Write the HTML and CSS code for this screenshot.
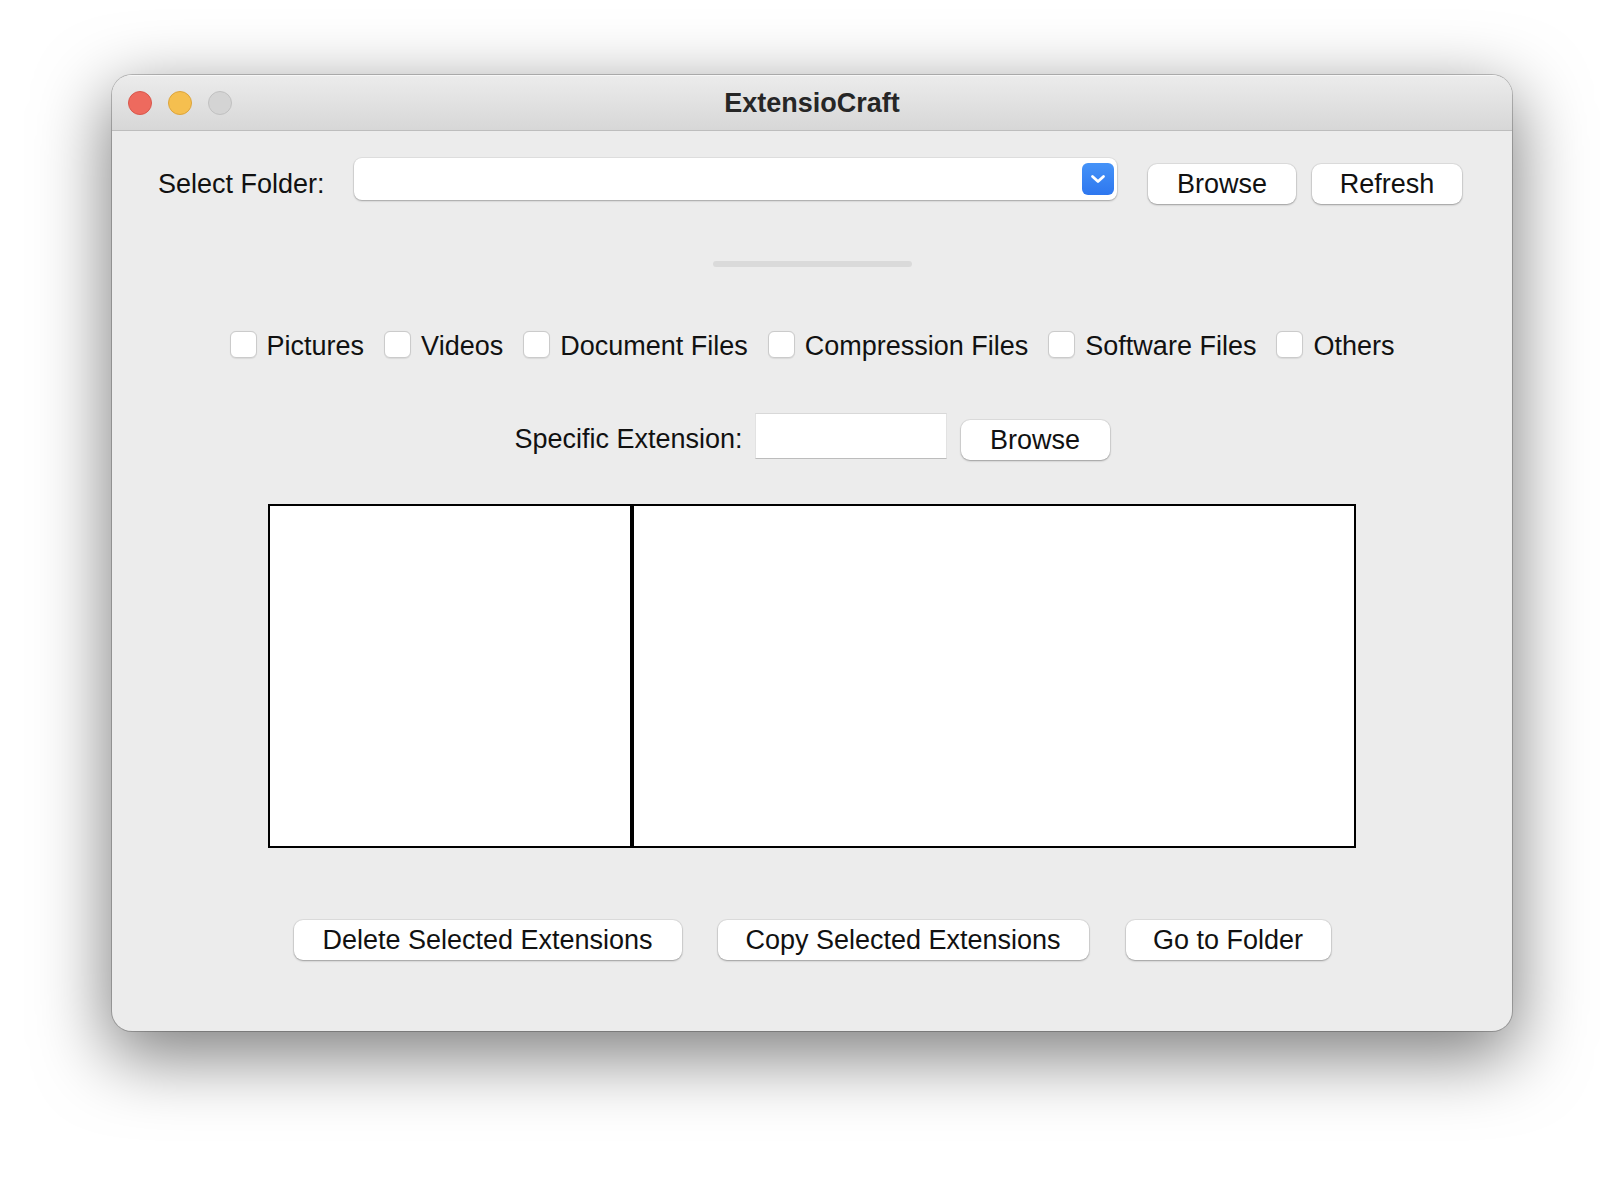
FILE: index.html
```html
<!DOCTYPE html>
<html lang="en">
<head>
<meta charset="utf-8">
<title>ExtensioCraft</title>
<link rel="stylesheet" href="styles.css">
</head>
<body>
<div class="page">
  <div class="window">
    <div class="titlebar">
      <div class="lights">
        <span class="light light-close"></span>
        <span class="light light-min"></span>
        <span class="light light-max"></span>
      </div>
      <div class="title">ExtensioCraft</div>
      <div></div>
    </div>
    <div class="content">
      <div class="row-folder">
        <span class="label folder-label">Select Folder:</span>
        <div class="combo">
          <span class="combo-btn">
            <svg width="16" height="10" viewBox="0 0 16 10"><path d="M2.5 2.5 L8 7.5 L13.5 2.5" fill="none" stroke="#fff" stroke-width="2.8" stroke-linecap="round" stroke-linejoin="round"/></svg>
          </span>
        </div>
        <button class="btn btn-browse">Browse</button>
        <button class="btn btn-refresh">Refresh</button>
      </div>
      <div class="progress"></div>
      <div class="checks">
        <label class="check"><input type="checkbox" class="cb"><span class="check-text">Pictures</span></label>
        <label class="check"><input type="checkbox" class="cb"><span class="check-text">Videos</span></label>
        <label class="check"><input type="checkbox" class="cb"><span class="check-text">Document Files</span></label>
        <label class="check"><input type="checkbox" class="cb"><span class="check-text">Compression Files</span></label>
        <label class="check"><input type="checkbox" class="cb"><span class="check-text">Software Files</span></label>
        <label class="check"><input type="checkbox" class="cb"><span class="check-text">Others</span></label>
      </div>
      <div class="ext-row">
        <span class="label ext-label">Specific Extension:</span>
        <input type="text" class="entry">
        <button class="btn btn-ext">Browse</button>
      </div>
      <div class="lists">
        <div class="listbox lb-left"></div>
        <div class="listbox lb-right"></div>
      </div>
      <div class="actions">
        <button class="btn btn-delete">Delete Selected Extensions</button>
        <button class="btn btn-copy">Copy Selected Extensions</button>
        <button class="btn btn-go">Go to Folder</button>
      </div>
    </div>
  </div>
</div>
</body>
</html>
```
FILE: styles.css
```css
html, body {
  margin: 0;
  padding: 0;
  background: #ffffff;
}
body {
  width: 1624px;
  height: 1180px;
  overflow: hidden;
  font-family: "Liberation Sans", Arial, sans-serif;
  font-size: 27px;
  color: #111;
}
.page {
  display: flex;
  justify-content: center;
  padding-top: 75px;
}
.window {
  width: 1400px;
  height: 956px;
  border-radius: 20px;
  background: #ececec;
  overflow: hidden;
  box-shadow: 0 0 0 1px rgba(0, 0, 0, 0.22), 0 22px 70px 4px rgba(0, 0, 0, 0.5);
  display: flex;
  flex-direction: column;
}
.titlebar {
  height: 55px;
  border-bottom: 1px solid #bdbdbd;
  background: linear-gradient(#ececec, #d7d7d7);
  box-shadow: inset 0 1px 0 rgba(255, 255, 255, 0.6);
  display: grid;
  grid-template-columns: 1fr auto 1fr;
  align-items: center;
  padding: 0 16px;
}
.lights {
  display: flex;
  gap: 16px;
}
.light {
  width: 24px;
  height: 24px;
  border-radius: 50%;
  box-sizing: border-box;
  border: 1px solid;
}
.light-close { background: #ee6a5e; border-color: #d8574c; }
.light-min { background: #f5bf4f; border-color: #dca43c; }
.light-max { background: #d4d4d4; border-color: #c0c0c0; }
.title {
  font-weight: bold;
  font-size: 27px;
  color: #262626;
  padding-top: 2px;
}
.content {
  display: flex;
  flex-direction: column;
}
.label {
  white-space: nowrap;
  color: #111;
}
.row-folder {
  display: flex;
  align-items: center;
  height: 52px;
  margin-top: 27px;
  padding-left: 46px;
}
.folder-label {
  width: 166px;
  line-height: 40px;
}
.combo {
  align-self: flex-start;
  margin-left: 30px;
  width: 763px;
  height: 42px;
  box-sizing: border-box;
  background: #fff;
  border-radius: 8px;
  box-shadow: 0 0 0 1px rgba(0, 0, 0, 0.05), 0 1px 2px rgba(0, 0, 0, 0.28);
  display: flex;
  justify-content: flex-end;
  align-items: center;
  padding-right: 3px;
}
.combo-btn {
  width: 32px;
  height: 32px;
  border-radius: 6px;
  background: linear-gradient(#4593f8, #2e77ef);
  display: flex;
  align-items: center;
  justify-content: center;
}
.btn {
  height: 40px;
  padding: 0;
  border: none;
  border-radius: 9px;
  background: #fff;
  box-shadow: 0 0 0 1px rgba(0, 0, 0, 0.06), 0 1px 2px rgba(0, 0, 0, 0.3);
  font-family: "Liberation Sans", Arial, sans-serif;
  font-size: 27px;
  color: #111;
  white-space: nowrap;
}
.btn-browse { width: 148px; margin-left: 31px; }
.btn-refresh { width: 150px; margin-left: 16px; }
.progress {
  margin: 51px auto 0;
  width: 199px;
  height: 6px;
  border-radius: 3px;
  background: #dadada;
}
.checks {
  margin-top: 63px;
  height: 28px;
  display: flex;
  justify-content: center;
  align-items: center;
  gap: 20px;
}
.check {
  display: flex;
  align-items: center;
  gap: 10px;
  white-space: nowrap;
}
.check-text {
  padding-top: 4px;
}
.cb {
  appearance: none;
  -webkit-appearance: none;
  margin: 0;
  width: 27px;
  height: 27px;
  box-sizing: border-box;
  border: 1px solid #cbcbcb;
  border-radius: 6px;
  background: #fff;
  box-shadow: 0 0.5px 1px rgba(0, 0, 0, 0.08);
}
.ext-row {
  margin-top: 55px;
  display: flex;
  justify-content: center;
  align-items: flex-start;
}
.ext-label {
  margin-top: 6px;
  line-height: 40px;
  margin-right: 12px;
}
.entry {
  width: 192px;
  height: 46px;
  box-sizing: border-box;
  margin: 0 14px 0 0;
  padding: 0;
  background: #fff;
  border: 1px solid #e2e2e2;
  border-top-color: #d8d8d8;
  border-bottom-color: #bcbcbc;
  border-radius: 0;
  outline: none;
}
.btn-ext {
  width: 149px;
  margin-top: 7px;
}
.lists {
  margin: 44px auto 0;
  width: 1088px;
  height: 344px;
  display: flex;
}
.listbox {
  box-sizing: border-box;
  border: 2px solid #000;
  background: #fff;
}
.lb-left { width: 364px; }
.lb-right { flex: 1; }
.actions {
  margin-top: 72px;
  display: flex;
  justify-content: center;
}
.btn-delete { width: 388px; }
.btn-copy { width: 371px; margin-left: 36px; }
.btn-go { width: 205px; margin-left: 37px; }
```
